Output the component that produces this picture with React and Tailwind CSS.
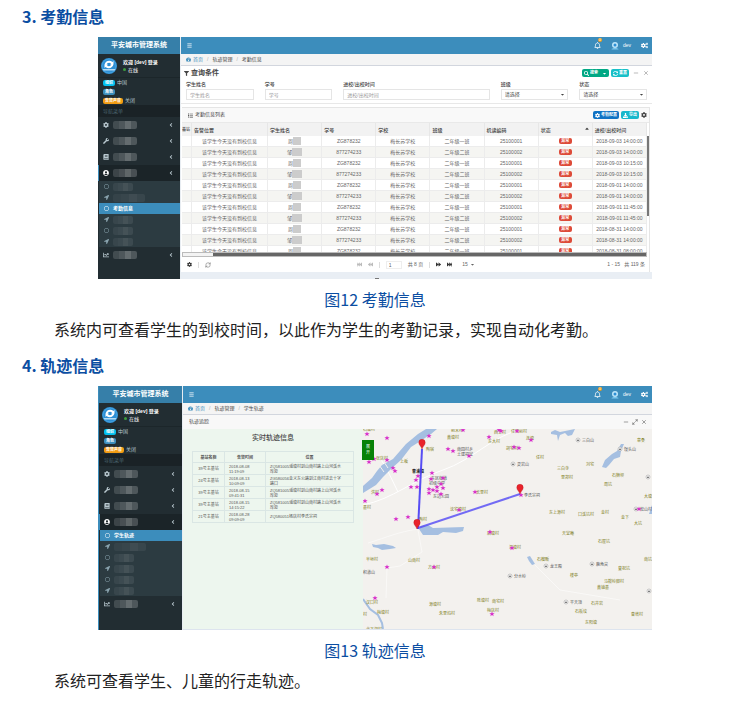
import {
  FaAngleLeft, FaBars, FaBook, FaCaretDown, FaChartLine, FaCog, FaCogs, FaDownload, FaFastBackward, FaFastForward,
  FaFilter, FaForward, FaBackward, FaList, FaLocationArrow, FaRegBell, FaRegCircle, FaSearch, FaSortUp,
  FaSyncAlt, FaTachometerAlt, FaUserCircle, FaWrench,
} from 'react-icons/fa';
import { Maximize2, Minus, RefreshCw, X } from 'lucide-react';

const dates = [
  '2018-09-03 14:00:00', '2018-09-03 14:00:00', '2018-09-03 10:15:00', '2018-09-03 10:15:00',
  '2018-09-01 14:00:00', '2018-09-01 14:00:00', '2018-09-01 11:45:00', '2018-09-01 11:45:00',
  '2018-08-31 14:00:00', '2018-08-31 14:00:00', '2018-08-31 08:00:00',
];

const records = dates.map((date, i) => ({
  date,
  name: i % 2 ? '邹' : '周',
  number: i % 2 ? '877274233' : 'ZG878232',
  grade: i % 2 ? '二年级二班' : '二年级一班',
  code: i % 2 ? '25100002' : '25100001',
}));

const tracks = [
  { station: '39号主基站', time: '2018-08-08 11:19:09', place: 'ZQ581005浦塘村到山南村路上山河溪水库旁' },
  { station: '24号主基站', time: '2018-08-13 10:09:09', place: 'ZG580056金义东公路到江南村进去十字路口' },
  { station: '39号主基站', time: '2018-08-15 09:41:31', place: 'ZQ581005浦塘村到山南村路上山河溪水库旁' },
  { station: '39号主基站', time: '2018-08-15 14:15:22', place: 'ZQ581005浦塘村到山南村路上山河溪水库旁' },
  { station: '21号主基站', time: '2018-08-28 09:09:09', place: 'ZQ580051杨店村李氏宗祠' },
];

const stars = [
  [367, 434], [387, 438], [429, 436], [463, 430], [499, 430], [489, 437], [448, 449], [453, 451], [469, 456],
  [369, 462], [387, 460], [374, 459], [393, 468], [395, 471], [432, 473], [418, 476], [416, 480], [431, 479],
  [443, 478], [441, 484], [411, 487], [417, 487], [429, 489], [437, 487], [443, 488], [433, 490], [437, 491],
  [429, 493], [441, 494], [382, 490], [377, 494], [475, 492], [365, 501], [459, 510], [517, 431], [531, 440],
  [514, 447], [519, 448], [501, 431], [521, 495], [639, 509], [396, 519], [408, 517], [490, 532], [387, 567],
  [434, 567], [375, 598], [492, 614], [512, 548],
];

const villages = [
  [369, 430, '石塘村'], [457, 431, '前宋村'], [453, 438, '黄塘村'], [500, 433, '西王村'], [494, 442, '东大村'],
  [382, 459, '张店村'], [404, 462, '上坂'], [430, 450, '陶宿'], [375, 493, '洪村'], [482, 493, '长里村'],
  [367, 508, '基村'], [519, 432, '任宅前村'], [530, 439, '连塘'], [512, 449, '胡宅村'], [540, 458, '任村'],
  [563, 469, '三白寺'], [590, 465, '刘宅'], [567, 478, '里郑村'], [618, 476, '石狮坝'], [608, 485, '周坑'],
  [641, 441, '章桑'], [648, 497, '大塘'], [458, 510, '沈宅塘村'], [423, 520, '陶村'], [493, 534, '后塘村'],
  [372, 560, '半垣村'], [414, 561, '山南村'], [434, 568, '方山村'], [372, 603, '汉口村'], [383, 613, '梅塘村'],
  [435, 605, '源塘村'], [447, 614, '朱里坞村'], [483, 601, '陈塘村'], [498, 602, '南宅村'], [493, 611, '梅店村'],
  [374, 630, '北下湖村'], [557, 513, '东上源村'], [586, 515, '口溪坑村'], [605, 513, '金村'], [625, 518, '金下'],
  [638, 524, '大坑'], [568, 534, '天堂庵'], [604, 542, '石屋坑'], [515, 548, '深塘村'], [543, 560, '石榴畈'],
  [624, 569, '皇祝坑'], [574, 576, '楼亭'], [614, 582, '马鞍岭脚村'], [603, 588, '黄铺基'], [597, 604, '石井岩'],
  [581, 612, '石板坟'], [591, 623, '东阳塘'], [637, 615, '曹塔村'], [648, 560, '南坑'], [365, 615, '村'],
];

const hills = [
  [578, 440, '三白山'], [620, 449, '馒头山'], [513, 464, '灵岩山'], [546, 566, '龙王殿'], [592, 564, '鹿角尖'],
  [510, 576, '分水岭'], [566, 602, '平天顶'], [636, 509, '松山村'], [648, 477, ''], [649, 591, ''],
];

const pins = [[422, 449], [520, 494], [417, 529]];

function Mask({ className }) {
  return (
    <span className={`flex h-2 overflow-hidden rounded-xs ${className}`}>
      <span className="flex-1 bg-white/15" />
      <span className="flex-1 bg-white/20" />
      <span className="flex-1 bg-white/30" />
      <span className="flex-1 bg-white/20" />
    </span>
  );
}

function Logo() {
  return (
    <svg viewBox="0 0 32 32" className="size-4 shrink-0">
      <circle cx="16" cy="16" r="16" fill="#2d8fd5" />
      <circle cx="16" cy="16" r="14" fill="none" stroke="#5fb4e8" strokeWidth="1" />
      <path d="M7 14C8 6 17 3 23 8l2-2v7h-7l2-2c-4-3-8-1-9 3zM25 12c-1 8-10 11-16 6l-2 2v-7h7l-2 2c4 3 8 1 9-3z" fill="#fff" />
      <path d="M3 22h26l-2 3H5z" fill="#b5dcf5" />
    </svg>
  );
}

function MenuItem({ icon: Icon, active }) {
  return (
    <li>
      <a
        href="#menu"
        aria-label="菜单"
        className={`flex h-4 items-center border-l pl-1 pr-1.5 text-[#b8c7ce] ${active ? 'border-[#3c8dbc] bg-[#1b2428]' : 'border-transparent'}`}
      >
        <Icon className={`size-[6px] ${active ? 'text-white' : ''}`} />
        <Mask className="ml-1 w-6" />
        <FaAngleLeft className="ml-auto size-[6px]" />
      </a>
    </li>
  );
}

function Sidebar({ current, position, className }) {
  const children = [FaRegCircle, FaLocationArrow, FaRegCircle, FaLocationArrow, FaRegCircle, FaLocationArrow];
  return (
    <aside className={`shrink-0 bg-[#222d32] text-[#b8c7ce] ${className}`}>
      <div className="flex h-[17px] items-center justify-center bg-[#367fa9] text-[7px] font-bold text-white">
        平安城市管理系统
      </div>
      <div className="flex h-6 items-center gap-1.5 border-b border-[#1c262a] pl-[3px] text-white">
        <Logo />
        <div className="text-[5px] leading-2">
          <p className="font-bold">欢迎 [dev] 登录</p>
          <p className="flex items-center gap-0.5">
            <span className="size-[3px] rounded-full bg-[#3c9b3f]" />
            在线
          </p>
        </div>
      </div>
      <div className="pl-[5px] text-[5px] leading-[9px]">
        <p className="flex h-[9px] items-center gap-0.5">
          <span className="rounded-xs bg-[#00c0ef] px-0.5 text-[4px] leading-[6px] font-bold text-white">组织</span>中国
        </p>
        <p className="flex h-[9px] items-center">
          <span className="rounded-xs bg-[#3c8dbc] px-0.5 text-[4px] leading-[6px] font-bold text-white">角色</span>
        </p>
        <p className="flex h-[9px] items-center gap-0.5">
          <span className="rounded-xs bg-[#f39c12] px-0.5 text-[4px] leading-[6px] font-bold text-white">告警声音</span>关闭
        </p>
      </div>
      <p className="bg-[#1a2226] pl-[5px] text-[5px] leading-3 text-[#4b646f]">导航菜单</p>
      <ul>
        <MenuItem icon={FaCog} />
        <MenuItem icon={FaWrench} />
        <MenuItem icon={FaBook} />
        <MenuItem icon={FaUserCircle} active />
        <li>
          <ul className="ml-px bg-[#2c3b41]">
            {children.map((Icon, i) => (
              <li key={i}>
                {i === position ? (
                  <a href="#current" className="flex h-[11px] items-center gap-1 bg-[#3c8dbc] pl-[5px] text-[5px] font-bold text-white">
                    <Icon className="size-[5px]" />
                    {current}
                  </a>
                ) : (
                  <a href="#page" aria-label="子菜单" className="flex h-[11px] items-center gap-1 pl-[5px] text-[#8aa4af]">
                    <Icon className="size-[5px]" />
                    <Mask className={i === 1 ? 'w-8 opacity-30' : 'w-5 opacity-40'} />
                  </a>
                )}
              </li>
            ))}
          </ul>
        </li>
        <MenuItem icon={FaChartLine} />
      </ul>
    </aside>
  );
}

function TopBar() {
  return (
    <header className="flex h-[17px] items-center bg-[#3c8dbc] pr-1 pl-1.5 text-[5px] text-white">
      <button type="button" aria-label="切换菜单"><FaBars className="size-[5px]" /></button>
      <button type="button" aria-label="通知" className="relative mr-2.5 ml-auto">
        <FaRegBell className="size-[7px]" />
        <span className="absolute -top-1 left-1 rounded-xs bg-[#f39c12] px-px text-[4px] leading-1">0</span>
      </button>
      <svg viewBox="0 0 16 16" className="mr-1 size-2">
        <circle cx="8" cy="6" r="6" fill="#bde6fa" />
        <circle cx="8" cy="6" r="3" fill="#2d8fd5" />
        <path d="M1 15c0-4 14-4 14 0z" fill="#7cc9f0" />
      </svg>
      <span>dev</span>
      <button type="button" aria-label="设置" className="ml-2.5"><FaCogs className="size-[7px]" /></button>
    </header>
  );
}

function Breadcrumb({ page }) {
  return (
    <nav className="flex h-3 items-center gap-1 border-b border-[#d2d6de] bg-[#f4f4f4] pl-[5px] text-[5px] text-[#444]">
      <a href="#home" className="flex items-center gap-0.5 text-[#3c8dbc]"><FaTachometerAlt className="size-[5px]" />首页</a>
      <span className="text-[#aaa]">/</span>
      <span>轨迹管理</span>
      <span className="text-[#aaa]">/</span>
      <span>{page}</span>
    </nav>
  );
}

function Field({ label, id, select, className = '' }) {
  return (
    <div className={className}>
      <label htmlFor={id} className="block text-[5px] leading-[9px] font-medium">{label}</label>
      {select ? (
        <div className="relative">
          <select id={id} className="block h-[11px] w-full appearance-none border border-[#e5e5e5] bg-white pl-[3px] text-[5px] leading-[9px] text-[#444]">
            <option>请选择</option>
          </select>
          <FaCaretDown className="pointer-events-none absolute top-[3px] right-[3px] size-[5px]" />
        </div>
      ) : (
        <input
          id={id}
          type="text"
          placeholder={label}
          className="block h-[11px] w-full border border-[#e5e5e5] bg-white pl-[3px] text-[5px] placeholder-[#999]"
        />
      )}
    </div>
  );
}

function Th({ children, className = 'pl-0.5' }) {
  return <th className={`h-[13px] border-r border-[#e7e7e7] text-left font-medium ${className}`}>{children}</th>;
}

function Td({ children }) {
  return <td className="h-[11px] border-r border-b border-[#ececec] whitespace-nowrap">{children}</td>;
}

function AttendanceScreen() {
  return (
    <div className="flex bg-white text-[#444]">
      <Sidebar current="考勤信息" position={2} className="w-[82px]" />
      <div className="flex min-w-0 flex-1 flex-col border-l border-[#e8edf2]">
        <TopBar />
        <Breadcrumb page="考勤信息" />
        <section className="border-b border-[#e8e8e8] px-[5px] pb-[3px]">
          <div className="-mx-0.5 flex h-[14px] items-center">
            <FaFilter className="mr-0.5 size-[5px]" />
            <h3 className="text-[7px] font-bold">查询条件</h3>
            <div className="ml-auto flex items-center gap-0.5 text-[4px] leading-2 font-bold text-white">
              <div className="flex rounded-xs bg-[#00a884]">
                <button type="button" className="flex h-2 items-center gap-px px-0.5"><FaSearch className="size-[5px]" />搜索</button>
                <button type="button" aria-label="更多" className="px-0.5"><FaCaretDown className="size-[5px]" /></button>
              </div>
              <button type="button" className="flex h-2 items-center gap-px rounded-xs bg-[#17c0c8] px-0.5">
                <FaSyncAlt className="size-[5px]" />重置
              </button>
              <button type="button" aria-label="收起" className="ml-0.5 text-[#777]"><Minus className="size-[6px]" /></button>
              <button type="button" aria-label="关闭" className="ml-0.5 text-[#777]"><X className="size-[6px]" /></button>
            </div>
          </div>
          <form className="grid grid-cols-6 gap-[11px]">
            <Field label="学生姓名" id="name" />
            <Field label="学号" id="number" />
            <Field label="进校/出校时间" id="time" className="col-span-2" />
            <Field label="班级" id="grade" select />
            <Field label="状态" id="state" select />
          </form>
        </section>
        <section className="mt-[3px] mr-0.5 ml-px border-t border-r border-[#e5e5e5]">
          <div className="flex h-[15px] items-center border-b border-[#e9e9e9] bg-[#f9f9f9] pr-0.5 pl-1.5 text-[5px]">
            <FaList className="mr-0.5 size-[5px]" />
            <h3>考勤信息列表</h3>
            <div className="ml-auto flex items-center gap-0.5 text-[4px] font-bold text-white">
              <button type="button" className="flex h-2 items-center gap-px rounded-xs bg-[#0f73c4] px-0.5">
                <FaCog className="size-[5px]" />考勤配置
              </button>
              <button type="button" className="flex h-2 items-center gap-px rounded-xs bg-[#17b8cc] px-0.5">
                <FaDownload className="size-[5px]" />导出
              </button>
              <button type="button" aria-label="表格设置" className="text-[#444]"><FaCog className="size-[6px]" /></button>
            </div>
          </div>
          <div className="flex h-[129px] overflow-hidden">
            <table className="w-full table-fixed border-separate border-spacing-0 text-[5px] leading-2">
              <thead className="bg-[#f2f2f2]">
                <tr>
                  <Th className="w-[10px] text-[4px] whitespace-nowrap">基站</Th>
                  <Th className="w-[76px] pl-0.5">告警位置</Th>
                  <Th>学生姓名</Th>
                  <Th>学号</Th>
                  <Th>学校</Th>
                  <Th>班级</Th>
                  <Th>机读编码</Th>
                  <Th>
                    <span className="flex items-center justify-between pr-0.5">状态<FaSortUp className="size-[6px]" /></span>
                  </Th>
                  <Th>进校/出校时间</Th>
                </tr>
              </thead>
              <tbody className="text-center text-[#666]">
                {records.map((r, i) => (
                  <tr key={i} className={i % 2 ? 'bg-[#f5f5f2]' : 'bg-white'}>
                    <Td />
                    <Td>该学生今天没有到校信息</Td>
                    <Td>
                      <span className="flex items-center justify-center">
                        {r.name}
                        <span className={`h-2 bg-[#ccc] ${i % 2 ? 'w-2.5' : 'w-2'}`} />
                      </span>
                    </Td>
                    <Td>{r.number}</Td>
                    <Td>梅长苏学校</Td>
                    <Td>{r.grade}</Td>
                    <Td>{r.code}</Td>
                    <Td>
                      <span className="mx-auto block w-[13px] rounded-xs bg-[#dd4b39] text-[4px] leading-[6px] font-bold text-white">异常</span>
                    </Td>
                    <Td>{r.date}</Td>
                  </tr>
                ))}
              </tbody>
            </table>
            <div className="w-0.5 shrink-0 pt-[13px]"><div className="h-20 bg-[#777]" /></div>
          </div>
          <div className="mr-0.5 flex h-[5px] border border-[#bbb] bg-[#f3f3f3]"><div className="ml-[30px] flex-1 bg-[#666]" /></div>
          <div className="flex h-[15px] items-center pr-1 pl-[5px] text-[5px] text-[#666]">
            <div className="flex flex-1 items-center gap-1.5">
              <FaCog className="size-[5px] text-[#333]" />
              <span className="h-1.5 border-l border-[#ddd]" />
              <RefreshCw className="size-[6px]" />
            </div>
            <div className="flex items-center gap-1.5">
              <FaFastBackward className="size-[5px] text-[#bbb]" />
              <FaBackward className="size-[5px] text-[#bbb]" />
              <span className="h-1.5 border-l border-[#ddd]" />
              <input aria-label="页码" defaultValue="1" className="h-2 w-4 border border-[#eee] pl-0.5" />
              <span>共 8 页</span>
              <span className="h-1.5 border-l border-[#ddd]" />
              <FaForward className="size-[5px] text-[#333]" />
              <FaFastForward className="size-[5px] text-[#333]" />
              <label className="flex items-center">
                <select aria-label="每页条数" className="w-3 appearance-none pl-1"><option>15</option></select>
                <FaCaretDown className="size-[5px]" />
              </label>
            </div>
            <span className="flex-1 text-right">1 - 15 &nbsp; 共 119 条</span>
          </div>
        </section>
        <div className="flex min-h-[7px] flex-1 items-end justify-center bg-[#e9eef4]">
          <span className="mr-20 h-px w-1 bg-[#777]" />
        </div>
      </div>
    </div>
  );
}

function TrackMap() {
  return (
    <svg viewBox="363 429 289 200" preserveAspectRatio="xMinYMin slice" className="block h-[200px] w-full bg-[#f3f1ee]">
      <g fill="none" stroke="#fff" strokeWidth="1">
        <path d="M363 505c30-6 50-25 80-35s50-35 80-41M380 458c7 10 12 22 18 34" />
        <path d="M418 530l4 22-22 14-13 2-1 30M418 529c-20 3-30 8-50 14M530 560l30 30 60 10" strokeOpacity=".5" />
      </g>
      <g fill="#a5bfe1">
        <path d="M363 493v-7l9-8 5-7 5-6 11-6 13-15 12-10 8-5h11l-6 5-12 8-8 5-10 13-10 9-8 8-7 8z" />
        <path d="M421 526l7-1 5 3 31-1-1 4-7 2-13-1-5 3-15 0-4-6z" />
        <path d="M372 544l4 1 8-1 9 2 3 2-6 1-8 1-4-2-5-1z" />
        <path d="M551 432l4-2 5 2 15-3-3 6-4 1-3-3-5 2-2 6-1-6-6-1z" />
        <path d="M602 467l3-7 7-6 5-3 4-7h3l-3 7-1 6-6 2-5 6-3 3z" />
        <path d="M527 557l3-1 5 8-3 1-3-4z" />
        <path d="M652 505l-3 9h3z" />
      </g>
      <path d="M363 599l7 10 8 6 4 8 1 6" fill="none" stroke="#a5bfe1" strokeWidth="2" />
      <path d="M379 465l5 7M384 462l4 6" stroke="#f3f1ee" strokeWidth="1" />
      <g fontSize="4" textAnchor="middle" fill="#7d7d1c">
        {villages.map(([x, y, name]) => <text key={`${x}-${y}`} x={x} y={y + 1}>{name}</text>)}
      </g>
      <g fontSize="4" fill="#555">
        {hills.map(([x, y, name]) => (
          <g key={`${x}-${y}`}>
            <circle cx={x} cy={y} r="2" fill="#f8f8f8" stroke="#999" strokeWidth=".5" />
            <path d={`M${x - 1} ${y + 1}l1-2 1 2z`} />
            <text x={x + 4} y={y + 2}>{name}</text>
          </g>
        ))}
        <text x="457" y="451">南园村乡</text>
        <text x="457" y="456">土建祠堂</text>
        <text x="431" y="480">东区街道</text>
        <text x="429" y="485">初级中学</text>
        <text x="433" y="498">东边公园</text>
        <text x="363" y="574">积道山</text>
        <text x="524" y="497">李氏宗祠</text>
        <text x="412" y="473" fontWeight="bold" fill="#222">曹浦镇</text>
      </g>
      <g fill="#d72bc9">
        {stars.map(([x, y]) => (
          <path key={`${x}-${y}`} transform={`translate(${x} ${y})`} d="M0-2.6l.7 1.8h1.9L1.1.4l.6 1.9L0 1.1l-1.7 1.2.6-1.9-1.5-1.2h1.9z" />
        ))}
      </g>
      <path d="M422 449L418 529" stroke="#3b30f5" strokeWidth="2" strokeOpacity=".85" />
      <path d="M418 528L520 494" stroke="#5148f5" strokeWidth="2" strokeOpacity=".8" />
      {pins.map(([x, y]) => (
        <path key={x} transform={`translate(${x} ${y})`} d="M0 0C-1-3-3.2-4-3.2-6.5a3.2 3.2 0 0 1 6.4 0C3.2-4 1-3 0 0z" fill="#e9232b" stroke="#b8151c" strokeWidth=".4" />
      ))}
    </svg>
  );
}

function TrackScreen() {
  return (
    <div className="flex bg-[#222d32] text-[#444]">
      <Sidebar current="学生轨迹" position={0} className="w-[84px] border-l border-[#3c8dbc]" />
      <div className="min-w-0 flex-1 border-l border-[#e8edf2]">
        <TopBar />
        <Breadcrumb page="学生轨迹" />
        <div className="flex h-[14px] items-center bg-[#f8f8f8] pr-[5px] pl-1.5 text-[5px]">
          <h3>轨迹追踪</h3>
          <div className="ml-auto flex gap-[3px]">
            <button type="button" aria-label="最小化"><Minus className="size-[6px]" /></button>
            <button type="button" aria-label="最大化"><Maximize2 className="size-[6px]" /></button>
            <button type="button" aria-label="关闭"><X className="size-[6px]" /></button>
          </div>
        </div>
        <div className="flex border-b border-[#dde4ee] bg-[#edf6ee]">
          <div className="w-[180px] shrink-0 px-[9px]">
            <h3 className="pt-[3px] text-center text-[7px] leading-3 font-medium">实时轨迹信息</h3>
            <table className="mt-[7px] w-full table-fixed border-collapse text-[4px] leading-[5px] text-[#555]">
              <thead>
                <tr>
                  <th className="h-[11px] w-8 border border-[#dae6e4]">基站名称</th>
                  <th className="w-[41px] border border-[#dae6e4]">告警时间</th>
                  <th className="border border-[#dae6e4]">位置</th>
                </tr>
              </thead>
              <tbody>
                {tracks.map((t, i) => (
                  <tr key={i}>
                    <td className="border border-[#dae6e4] text-center whitespace-nowrap">{t.station}</td>
                    <td className="h-3 border border-[#dae6e4] pr-2 pl-1">{t.time}</td>
                    <td className="border border-[#dae6e4] pr-3 pl-1">{t.place}</td>
                  </tr>
                ))}
              </tbody>
            </table>
          </div>
          <div className="relative min-w-0 flex-1">
            <TrackMap />
            <button type="button" className="absolute top-[11px] -left-px flex h-5 w-3 items-center justify-center bg-[#078207] px-1 text-[4px] leading-[6px] text-white">
              展开
            </button>
          </div>
        </div>
      </div>
    </div>
  );
}

function Section({ title, caption, text, children }) {
  return (
    <section className="mb-[5px]">
      <h2 className="px-[22px] text-[16px] leading-8 font-bold text-[#0b4ea2]">{title}</h2>
      <figure className="mt-[5px]">
        <div className="mx-[98px] overflow-hidden font-['Liberation_Sans','Noto_Sans_CJK_SC',sans-serif]">{children}</div>
        <figcaption className="mt-[5px] text-center text-[16px] leading-[30px] text-[#0b4ea2]">{caption}</figcaption>
      </figure>
      <p className="px-[22px] indent-8 text-[16px] leading-[30px] text-[#222]">{text}</p>
    </section>
  );
}

export default function App() {
  return (
    <main lang="zh-CN" className="bg-white font-['Noto_Sans_CJK_SC',sans-serif]">
      <Section
        title="3. 考勤信息"
        caption="图12 考勤信息"
        text="系统内可查看学生的到校时间，以此作为学生的考勤记录，实现自动化考勤。"
      >
        <AttendanceScreen />
      </Section>
      <Section title="4. 轨迹信息" caption="图13 轨迹信息" text="系统可查看学生、儿童的行走轨迹。">
        <TrackScreen />
      </Section>
    </main>
  );
}
